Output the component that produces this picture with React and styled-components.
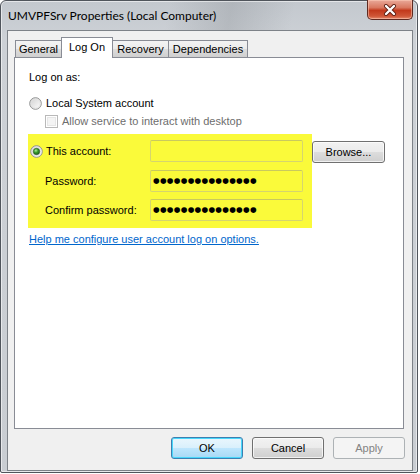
import React from 'react'
import styled, { createGlobalStyle } from 'styled-components'

const GlobalStyle = createGlobalStyle`
  html, body {
    margin: 0;
    padding: 0;
    background: #ffffff;
  }
  body {
    font-family: "Liberation Sans", Arial, sans-serif;
    font-size: 11px;
    color: #000;
  }
`

const Window = styled.div`
  width: 418px;
  height: 473px;
  box-sizing: border-box;
  border: 1px solid #50555c;
  border-radius: 6px 6px 2px 2px;
  padding: 0 4px 1px 6px;
  display: flex;
  flex-direction: column;
  background:
    linear-gradient(100deg, rgba(255,255,255,0) 40%, rgba(120,125,130,0.25) 55%, rgba(255,255,255,0) 70%) top / 100% 30px no-repeat,
    linear-gradient(180deg, #c3c8ce 0%, #cdd1d6 8%, #c9cdd2 100%);
  box-shadow: inset 0 0 0 1px rgba(255,255,255,0.55);
`

const TitleBar = styled.div`
  height: 29px;
  display: flex;
  align-items: flex-start;
`

const Title = styled.div`
  padding: 7px 0 0 1px;
  font-family: Lato, "Liberation Sans", sans-serif;
  font-size: 12px;
  color: #000;
`

const CloseButton = styled.div`
  margin-left: auto;
  margin-top: -1px;
  width: 46px;
  height: 20px;
  box-sizing: border-box;
  border: 1px solid #5e2a21;
  border-top: none;
  border-radius: 0 0 5px 5px;
  background: linear-gradient(180deg, #e9a999 0%, #d97860 40%, #c2391c 55%, #cf5637 85%, #e58a6e 100%);
  box-shadow: inset 0 0 0 1px rgba(255,210,190,0.5);
  display: flex;
  align-items: center;
  justify-content: center;
`

const Client = styled.div`
  flex: 1;
  background: #f0f0f0;
  border: 1px solid #7d8288;
  display: flex;
  flex-direction: column;
  padding: 6px 6px 0 6px;
`

const TabStrip = styled.div`
  height: 20px;
  display: flex;
  align-items: flex-end;
  padding-left: 2px;
  position: relative;
  z-index: 1;
`

const Tab = styled.div`
  box-sizing: border-box;
  width: ${({ w }) => w}px;
  margin-left: -1px;
  border: 1px solid #898c95;
  border-bottom: none;
  display: flex;
  justify-content: center;
  padding-top: ${({ active }) => (active ? 3 : 2)}px;
  height: ${({ active }) => (active ? 21 : 17)}px;
  margin-bottom: ${({ active }) => (active ? -1 : 0)}px;
  background: ${({ active }) =>
    active ? '#ffffff' : 'linear-gradient(180deg, #f3f3f3 0%, #ebebeb 50%, #dddddd 51%, #cfcfcf 100%)'};
  position: relative;
  z-index: ${({ active }) => (active ? 2 : 1)};
`

const Panel = styled.div`
  box-sizing: border-box;
  height: 372px;
  width: 390px;
  border: 1px solid #898c95;
  background: #ffffff;
  padding: 13px 14px 0 14px;
  display: flex;
  flex-direction: column;
  align-items: flex-start;
`

const Line = styled.div`
  line-height: 13px;
  height: 13px;
  white-space: nowrap;
`

const OptionRow = styled.div`
  display: flex;
  align-items: center;
  height: 14px;
  margin-top: ${({ mt }) => mt}px;
  margin-left: ${({ ml }) => ml || 0}px;
  gap: 4px;
  white-space: nowrap;
  color: ${({ disabled }) => (disabled ? '#6d6d6d' : '#000')};
`

const RadioWrap = styled.span`
  display: inline-flex;
  width: 13px;
  height: 13px;
`

const CheckBox = styled.span`
  display: inline-block;
  box-sizing: border-box;
  width: 13px;
  height: 13px;
  border: 1px solid #b9b9b9;
  background: #f4f4f4;
  box-shadow: inset 0 0 0 1px #ffffff, inset 0 0 0 2px #e6e6e6;
`

const AccountRow = styled.div`
  display: flex;
  align-items: flex-start;
  margin-top: 6px;
  margin-left: -1px;
`

const Highlight = styled.div`
  box-sizing: border-box;
  width: 284px;
  height: 94px;
  background: #fafa3a;
  padding: 6px 9px 0 2px;
  display: grid;
  grid-template-columns: 120px 153px;
  grid-auto-rows: 22px;
  row-gap: 7.5px;
  align-items: center;
`

const FieldLabel = styled.div`
  display: flex;
  align-items: center;
  gap: 3px;
  padding-left: ${({ indent }) => indent || 0}px;
  white-space: nowrap;
`

const TextBox = styled.div`
  box-sizing: border-box;
  height: 22px;
  border: 1px solid #d5d56e;
  border-top-color: #c9c95e;
  border-radius: 2px;
  background: #fafa3a;
  display: flex;
  align-items: center;
  padding-left: 2px;
`

const Dots = styled.span`
  font-family: "DejaVu Sans", sans-serif;
  font-size: 7.6px;
  letter-spacing: 0.3px;
  line-height: 10px;
  color: #000;
`

const Button = styled.div`
  box-sizing: border-box;
  width: ${({ w }) => w || 72}px;
  height: ${({ h }) => h || 22}px;
  margin-top: ${({ mt }) => mt || 0}px;
  border: 1px solid ${({ variant }) =>
    variant === 'default' ? '#3c7fb1' : variant === 'disabled' ? '#adb2b5' : '#707070'};
  border-radius: 3px;
  background: ${({ variant }) =>
    variant === 'disabled'
      ? '#f4f4f4'
      : variant === 'default'
      ? 'linear-gradient(180deg, #eaf6fd 0%, #d9f0fc 50%, #bee6fd 51%, #a7d9f5 100%)'
      : 'linear-gradient(180deg, #f2f2f2 0%, #ebebeb 50%, #dddddd 51%, #cfcfcf 100%)'};
  box-shadow: ${({ variant }) =>
    variant === 'default'
      ? 'inset 0 0 0 1px #48d7fb'
      : variant === 'disabled'
      ? 'none'
      : 'inset 0 0 0 1px rgba(255,255,255,0.7)'};
  color: ${({ variant }) => (variant === 'disabled' ? '#838383' : '#000')};
  display: flex;
  align-items: center;
  justify-content: center;
  white-space: nowrap;
`

const Link = styled.a`
  margin-top: 5px;
  color: #0066cc;
  text-decoration: underline;
  line-height: 13px;
  white-space: nowrap;
  cursor: pointer;
`

const ButtonBar = styled.div`
  display: flex;
  justify-content: flex-end;
  gap: 9px;
  margin-top: 8px;
  padding-right: 1px;
`

const Radio = ({ checked }) => (
  <RadioWrap>
    <svg width="13" height="13" viewBox="0 0 13 13">
      <defs>
        <linearGradient id={checked ? 'rbg1' : 'rbg0'} x1="0" y1="0" x2="1" y2="1">
          <stop offset="0" stopColor="#cfcfcf" />
          <stop offset="1" stopColor="#ffffff" />
        </linearGradient>
        <radialGradient id="rdot" cx="0.4" cy="0.35" r="0.7">
          <stop offset="0" stopColor="#a8ec98" />
          <stop offset="0.45" stopColor="#3b9e2c" />
          <stop offset="1" stopColor="#17561a" />
        </radialGradient>
      </defs>
      <circle cx="6.5" cy="6.5" r="5.8" fill={`url(#${checked ? 'rbg1' : 'rbg0'})`} stroke="#8e8f8f" strokeWidth="1" />
      <circle cx="6.5" cy="6.5" r="4.6" fill="none" stroke="#e2e2e2" strokeWidth="0.8" />
      {checked && <circle cx="6.5" cy="6.5" r="3.2" fill="url(#rdot)" stroke="#2a5a23" strokeWidth="0.6" />}
    </svg>
  </RadioWrap>
)

const CloseGlyph = () => (
  <svg width="14" height="12" viewBox="0 0 14 12">
    <path d="M3 2 L11 10 M11 2 L3 10" stroke="#5b1e12" strokeWidth="4" strokeLinecap="round" />
    <path d="M3 2 L11 10 M11 2 L3 10" stroke="#ffffff" strokeWidth="2.4" strokeLinecap="round" />
  </svg>
)

const tabs = [
  { label: 'General', w: 47 },
  { label: 'Log On', w: 52, active: true },
  { label: 'Recovery', w: 57 },
  { label: 'Dependencies', w: 80 }
]

const PASSWORD = '●'.repeat(15)

export default function App () {
  return (
    <>
      <GlobalStyle />
      <Window>
        <TitleBar>
          <Title>UMVPFSrv Properties (Local Computer)</Title>
          <CloseButton>
            <CloseGlyph />
          </CloseButton>
        </TitleBar>
        <Client>
          <TabStrip>
            {tabs.map(t => (
              <Tab key={t.label} w={t.w} active={t.active}>{t.label}</Tab>
            ))}
          </TabStrip>
          <Panel>
            <Line>Log on as:</Line>
            <OptionRow mt={12}>
              <Radio />
              <span>Local System account</span>
            </OptionRow>
            <OptionRow mt={4} ml={16} disabled>
              <CheckBox />
              <span>Allow service to interact with desktop</span>
            </OptionRow>
            <AccountRow>
              <Highlight>
                <FieldLabel>
                  <Radio checked />
                  <span>This account:</span>
                </FieldLabel>
                <TextBox />
                <FieldLabel indent={15}>Password:</FieldLabel>
                <TextBox><Dots>{PASSWORD}</Dots></TextBox>
                <FieldLabel indent={15}>Confirm password:</FieldLabel>
                <TextBox><Dots>{PASSWORD}</Dots></TextBox>
              </Highlight>
              <Button mt={7} w={73}>Browse...</Button>
            </AccountRow>
            <Link>Help me configure user account log on options.</Link>
          </Panel>
          <ButtonBar>
            <Button variant="default">OK</Button>
            <Button>Cancel</Button>
            <Button variant="disabled">Apply</Button>
          </ButtonBar>
        </Client>
      </Window>
    </>
  )
}
